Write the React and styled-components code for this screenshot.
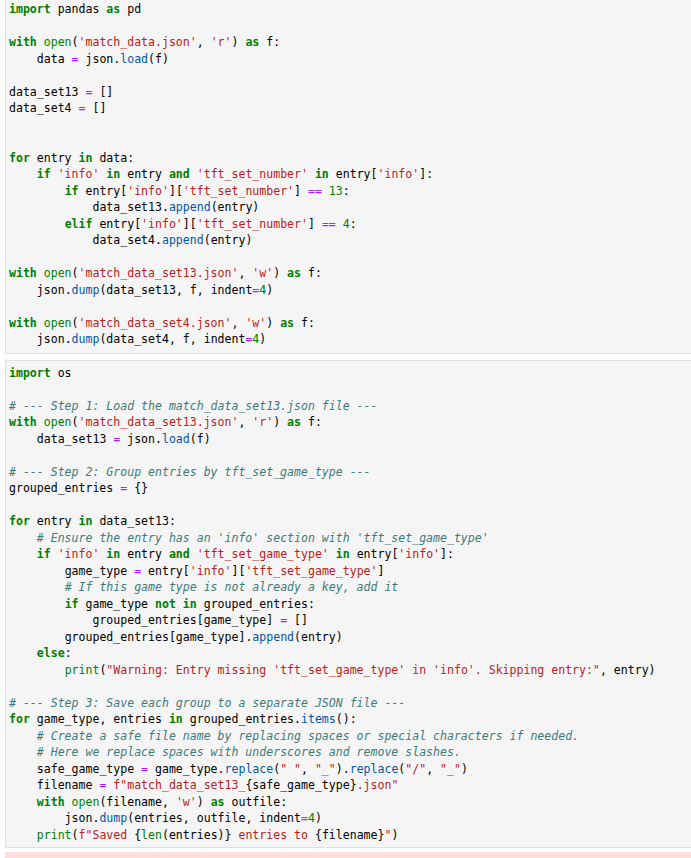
import React from "react";
import styled, { createGlobalStyle } from "styled-components";

const Global = createGlobalStyle`
  html, body {
    margin: 0;
    padding: 0;
    background: #ffffff;
    overflow: hidden;
  }
`;

const Notebook = styled.div`
  display: flex;
  flex-direction: column;
  padding-left: 5px;
  margin-right: -6px;
  margin-top: -4px;
`;

const Cell = styled.div`
  background: #f5f5f5;
  border: 1px solid #e0e0e0;
  padding: 4px 4px ${(p) => (p.$tight ? 4 : 5)}px 3px;
  margin-bottom: ${(p) => p.$gap}px;
`;

const Code = styled.pre`
  margin: 0;
  font-family: "DejaVu Sans Mono", "Liberation Mono", monospace;
  font-size: 11.55px;
  line-height: 16.5px;
  color: #000000;
  white-space: pre;
`;

const Line = styled.div`
  height: 16.5px;
`;

const COLORS = {
  keyword: "#008000",
  builtin: "#008000",
  number: "#008000",
  string: "#ba2121",
  comment: "#3d7b7b",
  operator: "#aa22ff",
  property: "#0055aa",
  plain: "#000000",
};

const Tok = styled.span`
  color: ${(p) => COLORS[p.$kind] || "#000"};
  font-weight: ${(p) => (p.$kind === "keyword" ? 700 : 400)};
  font-style: ${(p) => (p.$kind === "comment" ? "italic" : "normal")};
`;

const ErrorBar = styled.div`
  height: 20px;
  background: #ffdddd;
`;

const KW = new Set([
  "import", "as", "with", "for", "in", "and", "if", "elif", "else", "not",
  "from", "def", "return",
]);
const BI = new Set(["open", "print", "len"]);

function tokenize(line) {
  const out = [];
  let i = 0;
  let lastSig = "";
  while (i < line.length) {
    const c = line[i];
    const rest = line.slice(i);
    if (c === "#") {
      out.push(["comment", rest]);
      break;
    }
    const isF = c === "f" && (line[i + 1] === '"' || line[i + 1] === "'");
    if (isF || c === '"' || c === "'") {
      const q = isF ? line[i + 1] : c;
      let j = isF ? i + 2 : i + 1;
      let buf = line.slice(i, j);
      while (j < line.length && line[j] !== q) {
        if (isF && line[j] === "{") {
          if (buf) out.push(["string", buf]);
          buf = "";
          const k = line.indexOf("}", j);
          out.push(["plain", "{"]);
          out.push(...tokenize(line.slice(j + 1, k)));
          out.push(["plain", "}"]);
          j = k + 1;
        } else {
          buf += line[j];
          j++;
        }
      }
      buf += q;
      j++;
      out.push(["string", buf]);
      lastSig = q;
      i = j;
      continue;
    }
    let m = rest.match(/^[A-Za-z_]\w*/);
    if (m) {
      const w = m[0];
      let kind = "plain";
      if (lastSig === ".") kind = "property";
      else if (KW.has(w)) kind = "keyword";
      else if (BI.has(w)) kind = "builtin";
      out.push([kind, w]);
      lastSig = w;
      i += w.length;
      continue;
    }
    m = rest.match(/^\d+/);
    if (m) {
      out.push(["number", m[0]]);
      lastSig = m[0];
      i += m[0].length;
      continue;
    }
    m = rest.match(/^[=<>!+\-*/%]+/);
    if (m) {
      out.push(["operator", m[0]]);
      lastSig = m[0];
      i += m[0].length;
      continue;
    }
    out.push(["plain", c]);
    if (c !== " ") lastSig = c;
    i++;
  }
  return out;
}

const CELL1 = `import pandas as pd

with open('match_data.json', 'r') as f:
    data = json.load(f)

data_set13 = []
data_set4 = []


for entry in data:
    if 'info' in entry and 'tft_set_number' in entry['info']:
        if entry['info']['tft_set_number'] == 13:
            data_set13.append(entry)
        elif entry['info']['tft_set_number'] == 4:
            data_set4.append(entry)

with open('match_data_set13.json', 'w') as f:
    json.dump(data_set13, f, indent=4)

with open('match_data_set4.json', 'w') as f:
    json.dump(data_set4, f, indent=4)`;

const CELL2 = `import os

# --- Step 1: Load the match_data_set13.json file ---
with open('match_data_set13.json', 'r') as f:
    data_set13 = json.load(f)

# --- Step 2: Group entries by tft_set_game_type ---
grouped_entries = {}

for entry in data_set13:
    # Ensure the entry has an 'info' section with 'tft_set_game_type'
    if 'info' in entry and 'tft_set_game_type' in entry['info']:
        game_type = entry['info']['tft_set_game_type']
        # If this game type is not already a key, add it
        if game_type not in grouped_entries:
            grouped_entries[game_type] = []
        grouped_entries[game_type].append(entry)
    else:
        print("Warning: Entry missing 'tft_set_game_type' in 'info'. Skipping entry:", entry)

# --- Step 3: Save each group to a separate JSON file ---
for game_type, entries in grouped_entries.items():
    # Create a safe file name by replacing spaces or special characters if needed.
    # Here we replace spaces with underscores and remove slashes.
    safe_game_type = game_type.replace(" ", "_").replace("/", "_")
    filename = f"match_data_set13_{safe_game_type}.json"
    with open(filename, 'w') as outfile:
        json.dump(entries, outfile, indent=4)
    print(f"Saved {len(entries)} entries to {filename}")`;

function CodeBlock({ source }) {
  return (
    <Code>
      {source.split("\n").map((ln, li) => (
        <Line key={li}>
          {tokenize(ln).map(([kind, text], ti) => (
            <Tok key={ti} $kind={kind}>
              {text}
            </Tok>
          ))}
        </Line>
      ))}
    </Code>
  );
}

export default function App() {
  return (
    <>
      <Global />
      <Notebook>
        <Cell $gap={6}>
          <CodeBlock source={CELL1} />
        </Cell>
        <Cell $gap={4} $tight>
          <CodeBlock source={CELL2} />
        </Cell>
        <ErrorBar />
      </Notebook>
    </>
  );
}
